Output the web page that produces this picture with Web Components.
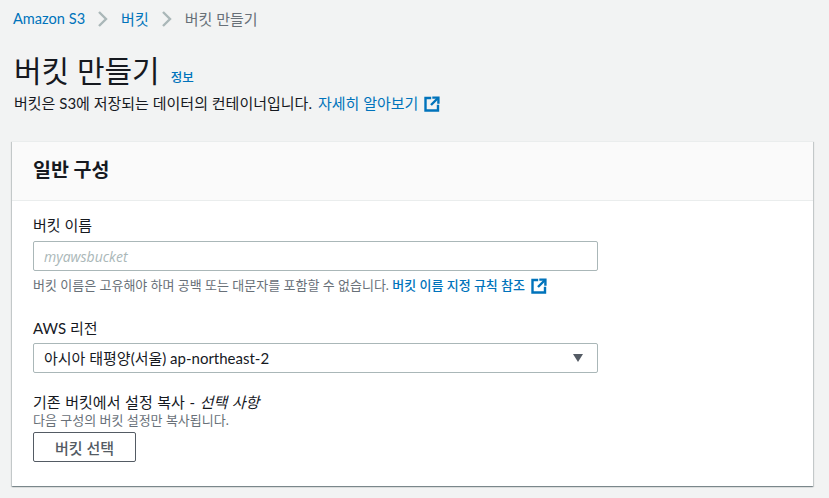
<!DOCTYPE html>
<html lang="ko"><head><meta charset="utf-8"><style>
html,body{margin:0;padding:0;height:498px;overflow:hidden;background:#f2f3f3;color:#16191f;font:15px/22px Lato,"Noto Sans CJK KR",sans-serif}
</style></head><body>
<s3-page></s3-page>
<script>
const FONT='Lato,"Noto Sans CJK KR",sans-serif';
const EXT='<svg viewBox="0 0 16 16" width="16" height="16" fill="none" stroke="#0073bb" stroke-width="2.4"><path d="M6 2H1.5v12.5H14V10" stroke-linecap="square"/><path d="M9.5 1.6H14.4V6.5" stroke-linecap="square" /><path d="M14 2 7 9"/></svg>';
const CHEV='<svg width="10" height="16" viewBox="0 0 10 16" fill="none" stroke="#aab7b8" stroke-width="2.4"><path d="M1 1l7 7-7 7"/></svg>';
function def(name,html,init){customElements.define(name,class extends HTMLElement{constructor(){super();this.attachShadow({mode:'open'}).innerHTML=html;}connectedCallback(){init&&init(this)}})}
def('ext-icon',`<style>:host{display:inline-flex;width:16px;height:16px}</style>${EXT}`);
def('s3-breadcrumbs',`<style>:host{display:flex;align-items:center;height:20px;padding:9px 0 0 13px;font-size:15px;line-height:20px;color:#687078}
a{color:#0073bb;text-decoration:none}.f{font-size:14.6px}svg{margin:0 13px;display:block}</style>
<a class="f">Amazon S3</a>${CHEV}<a>버킷</a>${CHEV}<span>버킷 만들기</span>`);
def('s3-header',`<style>:host{display:block;padding:23px 0 0 14px}
.t{display:flex;align-items:baseline;gap:11px;height:36px;line-height:36px}
h1{margin:0;font-size:30px;font-weight:400;color:#16191f}
.i{font-size:12.5px;font-weight:500;color:#0073bb}
p{margin:5px 0 0;display:flex;align-items:center;font-size:15px;line-height:20px;height:20px}
a{color:#0073bb;margin-left:6px}ext-icon{margin:2px 0 0 6px}</style>
<div class="t"><h1>버킷 만들기</h1><span class="i">정보</span></div>
<p><span>버킷은 S3에 저장되는 데이터의 컨테이너입니다.</span><a>자세히 알아보기</a><ext-icon></ext-icon></p>`);
def('s3-card',`<style>:host{display:block;margin:28px 16px 0 12px;background:#fff;box-shadow:0 1px 1px 0 rgba(0,28,36,.3),1px 1px 1px 0 rgba(0,28,36,.15),-1px 1px 1px 0 rgba(0,28,36,.15);border-top:1px solid #eaeded}
header{height:59px;box-sizing:border-box;background:#fafafa;border-bottom:1px solid #eaeded;padding:0 21px 3px;display:flex;align-items:center;font-size:19.5px;font-weight:700;line-height:24px}
.b{padding:14px 21px 24px}</style>
<header><slot name="title"></slot></header><div class="b"><slot></slot></div>`);
def('s3-field',`<style>:host{display:block}
.l{font-size:15px;line-height:20px;color:#16191f;display:block}
.d{font-size:13px;line-height:16px;color:#687078;display:block}</style>
<span class="l"><slot name="label"></slot></span><span class="d"><slot name="desc-top"></slot></span><slot></slot><span class="d"><slot name="desc"></slot></span>`);
def('s3-input',`<style>:host{display:block;width:565px;margin-top:6px}
input{display:block;box-sizing:border-box;width:100%;height:30px;border:1px solid #aab7b8;border-radius:2px;padding:0 10px;font:italic 14px "Open Sans",sans-serif;outline:0;background:#fff}
input::placeholder{color:#aab7b8;opacity:1}</style><input type="text" placeholder="myawsbucket">`);
def('s3-select',`<style>:host{display:flex;box-sizing:border-box;width:565px;height:30px;margin-top:5px;border:1px solid #aab7b8;border-radius:2px;align-items:center;justify-content:space-between;padding:0 14px 0 10px;font-size:15px;line-height:20px;color:#16191f;background:#fff}
i{display:block;width:0;height:0;border:5px solid transparent;border-top:8px solid #545b64;border-bottom:0}</style><span><slot></slot></span><i></i>`);
def('s3-button',`<style>:host{display:inline-block}
button{display:block;box-sizing:border-box;width:103px;height:30px;background:#fff;border:1px solid #545b64;border-radius:2px;color:#545b64;font:500 15px ${FONT};padding:0}</style><button><slot></slot></button>`);
def('s3-page',`<style>:host{display:block}a{color:#0073bb;font-weight:500}
.h{display:inline-flex;align-items:center}
ext-icon{margin:2px 0 0 6px}
i{font-style:italic}</style>
<s3-breadcrumbs></s3-breadcrumbs><s3-header></s3-header>
<s3-card><span slot="title">일반 구성</span>
<s3-field style="margin-bottom:24px"><span slot="label">버킷 이름</span><s3-input></s3-input><span slot="desc" class="h" style="margin-top:5px">버킷 이름은 고유해야 하며 공백 또는 대문자를 포함할 수 없습니다.&nbsp;<a>버킷 이름 지정 규칙 참조</a><ext-icon></ext-icon></span></s3-field>
<s3-field style="margin-bottom:19px"><span slot="label">AWS 리전</span><s3-select>아시아 태평양(서울) ap-northeast-2</s3-select></s3-field>
<s3-field><span slot="label" style="word-spacing:.8px">기존 버킷에서 설정 복사 - <i>선택 사항</i></span><span slot="desc-top">다음 구성의 버킷 설정만 복사됩니다.</span><s3-button style="margin-top:4px">버킷 선택</s3-button></s3-field>
</s3-card>`);
</script></body></html>
